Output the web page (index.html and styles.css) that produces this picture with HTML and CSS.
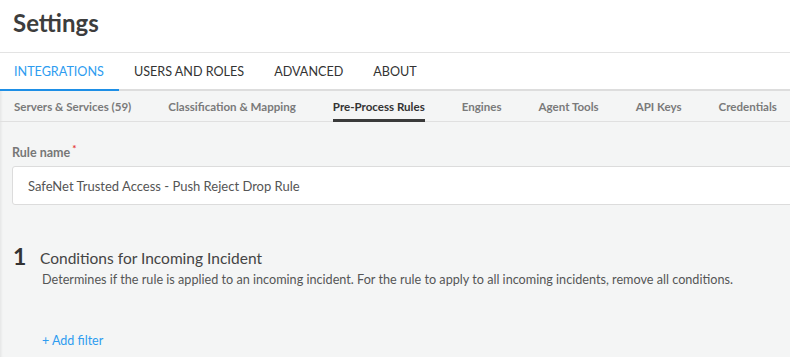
FILE: index.html
```html
<!doctype html>
<html lang="en">
<head>
<meta charset="utf-8">
<meta name="viewport" content="width=device-width, initial-scale=1">
<title>Settings</title>
<link rel="stylesheet" href="styles.css">
</head>
<body>

<header class="page-header">
	<h1>Settings</h1>
</header>

<nav class="tabs">
	<a class="tab --active">INTEGRATIONS</a>
	<a class="tab">USERS AND ROLES</a>
	<a class="tab">ADVANCED</a>
	<a class="tab">ABOUT</a>
</nav>

<nav class="subtabs">
	<a class="subtab">Servers &amp; Services (59)</a>
	<a class="subtab">Classification &amp; Mapping</a>
	<a class="subtab --active">Pre-Process Rules</a>
	<a class="subtab">Engines</a>
	<a class="subtab">Agent Tools</a>
	<a class="subtab">API Keys</a>
	<a class="subtab">Credentials</a>
</nav>

<main class="content">
	<div class="field">
		<label for="rule-name">Rule name<span class="req">*</span></label>
		<input type="text" id="rule-name" value="SafeNet Trusted Access - Push Reject Drop Rule">
	</div>

	<section class="step">
		<div class="step-num">1</div>
		<div class="step-body">
			<h2>Conditions for Incoming Incident</h2>
			<p>Determines if the rule is applied to an incoming incident. For the rule to apply to all incoming incidents, remove all conditions.</p>
			<a class="add-filter">+ Add filter</a>
		</div>
	</section>
</main>

</body>
</html>
```

FILE: styles.css
```css
html, body {
	height: 100%;
}

body {
	margin: 0;
	overflow: hidden;
	font-family: 'Lato', sans-serif;
	background: #f4f5f5;
	color: #555;
	box-shadow: inset 3px 0 3px -2px rgba(0, 0, 0, 0.08);
}

.page-header {
	height: 53px;
	background: #fff;
	border-bottom: 1px solid #e3e3e3;
	box-sizing: border-box;
}

h1 {
	margin: 0;
	padding: 8px 0 0 13px;
	font-size: 24px;
	font-weight: 700;
	color: #3d3d3d;
	line-height: 30px;
}

.tabs {
	display: flex;
	height: 38px;
	background: #fff;
	border-bottom: 2px solid #ddd;
	box-sizing: border-box;
}

.tab {
	display: flex;
	align-items: center;
	padding: 1px 15px 0 15px;
	margin-bottom: -2px;
	font-size: 12.6px;
	color: #333;
	border-bottom: 2px solid transparent;
}

.tab:first-child {
	padding-left: 14px;
}

.tab.--active {
	color: #2d9cf0;
	border-bottom-color: #1e8fe6;
}

.subtabs {
	display: flex;
	height: 31px;
	padding-left: 14px;
	gap: 37px;
	border-bottom: 1px solid #e0e0e0;
	box-sizing: border-box;
}

.subtab {
	display: flex;
	align-items: center;
	margin-bottom: -1px;
	font-size: 11.55px;
	font-weight: 700;
	color: #7a7a7a;
	border-bottom: 3px solid transparent;
	padding-top: 3px;
}

.subtab.--active {
	color: #333;
	border-bottom-color: #3a3a3a;
}

.content {
	padding: 23px 0 0 12px;
}

label {
	display: block;
	font-size: 12.5px;
	font-weight: 700;
	color: #777;
	line-height: 16px;
}

.req {
	position: relative;
	top: -5px;
	margin-left: 2px;
	font-size: 10px;
	color: #e53935;
}

input[type="text"] {
	display: block;
	width: 820px;
	height: 39px;
	margin-top: 5px;
	padding: 0 15px;
	box-sizing: border-box;
	border: 1px solid #dcdcdc;
	border-radius: 3px;
	background: #fff;
	font-family: inherit;
	font-size: 13px;
	color: #555;
}

.step {
	display: flex;
	margin-top: 36px;
}

.step-num {
	width: 27px;
	padding-left: 1px;
	font-size: 23px;
	font-weight: 700;
	color: #333;
	line-height: 30px;
}

.step-body {
	padding-top: 7px;
}

h2 {
	margin: 0;
	font-size: 15.5px;
	font-weight: 400;
	color: #444;
	line-height: 20px;
}

p {
	margin: 4px 0 0 2px;
	font-size: 12.65px;
	color: #555;
	line-height: 16px;
}

.add-filter {
	display: block;
	margin: 45px 0 0 2px;
	font-size: 12.5px;
	color: #2d9cf0;
}
```
